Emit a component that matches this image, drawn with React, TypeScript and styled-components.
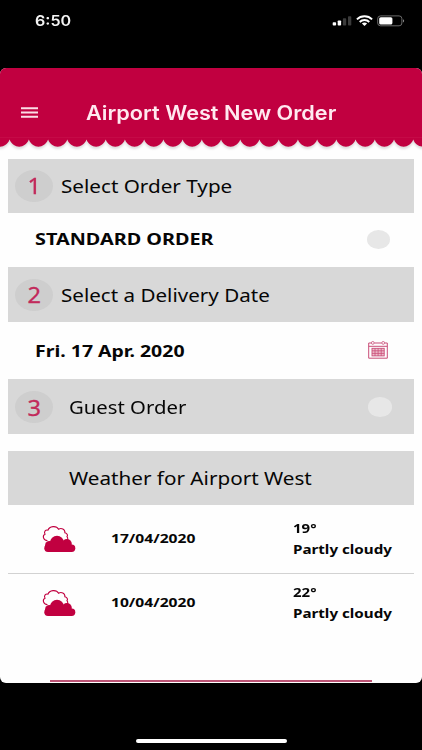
import React from 'react';
import styled, { createGlobalStyle } from 'styled-components';

const CRIMSON = '#c10040';

const GlobalStyle = createGlobalStyle`
  body { margin: 0; background: #000; }
  * { box-sizing: border-box; }
`;

const Screen = styled.div`
  width: 422px;
  height: 750px;
  background: #000;
  display: flex;
  flex-direction: column;
  overflow: hidden;
`;

const Text = styled.span<{ $size: number; $stretch: number; $bold?: boolean; $drop?: number }>`
  display: block;
  font-family: "Noto Sans", "Open Sans", sans-serif;
  font-size: ${p => p.$size}px;
  font-weight: ${p => (p.$bold ? 700 : 400)};
  line-height: 22px;
  color: #060606;
  white-space: nowrap;
  transform: translateY(${p => p.$drop ?? 0}px) scaleX(${p => p.$stretch});
  transform-origin: left center;
`;

const StatusBar = styled.div`
  height: 67.5px;
  flex: none;
  display: flex;
  align-items: flex-start;
  justify-content: space-between;
  padding: 12px 17px 0 35px;
`;

const Clock = styled(Text)`
  font-family: Inter, sans-serif;
  font-weight: 600;
  color: #f4f4f4;
  line-height: 18px;
`;

const StatusIcons = styled.svg`
  display: block;
  width: 74px;
  height: 18px;
`;

const Card = styled.div`
  height: 615px;
  flex: none;
  background: #fefefe;
  border-radius: 6px;
  overflow: hidden;
  display: flex;
  flex-direction: column;
`;

const Header = styled.header`
  height: 69px;
  flex: none;
  background: ${CRIMSON};
  display: flex;
  align-items: center;
  padding: 21px 0 0 21px;
`;

const MenuIcon = styled.svg`
  display: block;
  width: 17px;
  height: 11px;
  margin-right: 48px;
`;

const Title = styled(Text)`
  font-family: Inter, sans-serif;
  font-weight: 600;
  color: #ffe9f0;
`;

const Awning = styled.svg`
  display: block;
  flex: none;
  width: 422px;
  height: 22px;
`;

const Shadow = styled.path`
  filter: blur(1px);
`;

const Content = styled.main`
  flex: 1;
  padding: 0 8px;
  display: flex;
  flex-direction: column;
`;

const Bar = styled.section<{ $height: number; $indent?: number; $gap?: number }>`
  height: ${p => p.$height}px;
  flex: none;
  background: #d8d8d8;
  display: flex;
  align-items: center;
  padding: 1px 22px 0 ${p => p.$indent ?? 6.5}px;
  gap: ${p => p.$gap ?? 8}px;
  width: 405.5px;
`;

const Badge = styled.div`
  width: 38.5px;
  height: 32px;
  border-radius: 50%;
  background: #cecece;
  display: grid;
  place-items: center;
  flex: none;
`;

const Digit = styled(Text)`
  color: #c22a5b;
  transform-origin: center;
  -webkit-text-stroke: 0.3px #c22a5b;
`;

const Row = styled.section<{ $height: number; $right: number }>`
  height: ${p => p.$height}px;
  flex: none;
  display: flex;
  align-items: center;
  justify-content: space-between;
  padding: 0 ${p => p.$right}px 0 26.5px;
`;

const Toggle = styled.div`
  width: 23.5px;
  height: 19.5px;
  border-radius: 50%;
  background: #e7e7e7;
  margin-left: auto;
`;

const CalendarSvg = styled.svg`
  display: block;
  width: 20px;
  height: 18px;
  margin-bottom: 1px;
`;

const Gap = styled.div`
  height: 16.5px;
  flex: none;
`;

const Forecast = styled.article<{ $height: number; $line?: boolean }>`
  width: 405.5px;
  height: ${p => p.$height}px;
  flex: none;
  display: grid;
  grid-template-columns: 69px 182px 1fr;
  align-items: center;
  padding-left: 33.5px;
  border-bottom: 1px solid ${p => (p.$line ? '#d2d2d2' : 'transparent')};
`;

const CloudSvg = styled.svg`
  display: block;
  width: 36px;
  height: 28px;
`;

const Conditions = styled.div`
  display: flex;
  flex-direction: column;
`;

const NextButtonEdge = styled.div`
  margin: auto 42px 1px;
  height: 1.5px;
  background: #bd5475;
`;

const HomeArea = styled.div`
  flex: 1;
  display: flex;
  justify-content: center;
  align-items: flex-end;
  padding-bottom: 7px;
`;

const HomeIndicator = styled.div`
  width: 151px;
  height: 4px;
  border-radius: 2px;
  background: #fff;
`;

const SCALLOP = 19.22;
const scallopPath = () => {
  let d = 'M-9.6 0 V2.5';
  for (let i = 0; i < 23; i++) {
    const x = -9.6 + i * SCALLOP;
    d += ` L${x} 2.5 C${x + 3.4} 12 ${x + SCALLOP - 3.4} 12 ${x + SCALLOP} 2.5`;
  }
  return `${d} V0 Z`;
};

const Scallops = () => (
  <Awning viewBox="0 0 422 22">
    <Shadow d={scallopPath()} fill="#9c8f93" opacity="0.32" transform="translate(0 2.3)" />
    <path d={scallopPath()} fill={CRIMSON} />
    <path d="M0 .5H422" stroke="#cc1c55" strokeWidth=".6" opacity=".6" />
  </Awning>
);

const Cloud = () => (
  <CloudSvg viewBox="0 0 36 28">
    <path
      d="M5 15.600 C.9 14.900 .3 10.400 3 9.200 C1.500 6.400 3.800 4.600 6 5.200 C7.400 .9 14.400 .3 16.600 4.200 C19.200 2.600 23.200 3.900 22.900 7.800 C25.400 8.300 26 10.400 25 11.700 C25.900 12.600 26 13.600 25.500 14.800"
      fill="none" stroke={CRIMSON} strokeWidth="1.100" strokeLinecap="round"
    />
    <g fill={CRIMSON}>
      <rect x="2.300" y="19.600" width="31" height="7.300" rx="3.650" />
      <ellipse cx="15" cy="17.300" rx="6.900" ry="6.500" />
      <circle cx="24.900" cy="19" r="4.900" />
      <circle cx="7.300" cy="20.200" r="4.200" />
      <path d="M8 16.500H27V24H8Z" />
    </g>
  </CloudSvg>
);

const Calendar = () => (
  <CalendarSvg viewBox="0 0 20 18" fill="none" stroke="#c94e78">
    <path d="M.7 2H3.300M6.300 2H13.700M16.700 2H19.300V17.200H.7V2M.7 5.300H19.300" strokeWidth="1" />
    <circle cx="4.800" cy="1.900" r="1.400" strokeWidth=".8" />
    <circle cx="15.200" cy="1.900" r="1.400" strokeWidth=".8" />
    <rect x="4" y="7.300" width="12.200" height="7.600" strokeWidth=".9" fill="#eebccb" />
    <path d="M7 7.300V15M10.100 7.300V15M13.200 7.300V15M4 9.800H16.200M4 12.400H16.200" strokeWidth=".8" />
  </CalendarSvg>
);

const PhoneStatus = () => (
  <StatusIcons viewBox="0 0 74 18">
    <rect x="1.700" y="10.200" width="3.400" height="3.400" rx=".8" fill="#fff" />
    <rect x="6.700" y="8.400" width="3.400" height="5.200" rx=".8" fill="#fff" />
    <rect x="11.900" y="6.200" width="3.300" height="7.400" rx=".8" fill="#3b3b3b" />
    <rect x="17" y="4.200" width="3.300" height="9.400" rx=".8" fill="#3b3b3b" />
    <g fill="none" stroke="#fff" strokeWidth="1.900">
      <path d="M25.900 7.300 C30 3.200 37 3.200 41.100 7.300" />
      <path d="M28.700 10 C31.300 7.400 35.700 7.400 38.300 10" />
    </g>
    <path d="M33.500 13.900 L30.900 11.500 C32.300 10.200 34.700 10.200 36.100 11.500 Z" fill="#fff" />
    <rect x="46.700" y="3.900" width="24.200" height="9.900" rx="2.800" fill="none" stroke="#777" strokeWidth=".9" />
    <rect x="48.200" y="5.200" width="13.200" height="7.300" rx="1.600" fill="#fff" />
    <path d="M72 7.200 C73.500 7.800 73.500 9.800 72 10.400 Z" fill="#888" />
  </StatusIcons>
);

const forecasts = [
  { date: '17/04/2020', temp: '19°', sky: 'Partly cloudy', height: 69.5, line: true },
  { date: '10/04/2020', temp: '22°', sky: 'Partly cloudy', height: 58, line: false },
];

export default function App() {
  return (
    <>
      <GlobalStyle />
      <Screen>
        <StatusBar>
          <Clock $size={14.5} $stretch={1.109}>6:50</Clock>
          <PhoneStatus />
        </StatusBar>
        <Card>
          <Header>
            <MenuIcon viewBox="0 0 17 11" aria-label="Menu">
              <path d="M0 1.300H17M0 5.500H17M0 9.700H17" stroke="#fbdde6" strokeWidth="1.900" />
            </MenuIcon>
            <Title $size={19.5} $stretch={1.111}>Airport West New Order</Title>
          </Header>
          <Scallops />
          <Content>
            <Bar $height={54}>
              <Badge><Digit $size={21.5} $stretch={1.1}>1</Digit></Badge>
              <Text $size={18} $stretch={1.148} $drop={-0.5}>Select Order Type</Text>
            </Bar>
            <Row $height={54} $right={24}>
              <Text $size={15.4} $stretch={1.288} $drop={-0.5} $bold>STANDARD ORDER</Text>
              <Toggle />
            </Row>
            <Bar $height={55.5}>
              <Badge><Digit $size={21.5} $stretch={1.1} $drop={-0.4}>2</Digit></Badge>
              <Text $size={18} $stretch={1.144} $drop={-0.4}>Select a Delivery Date</Text>
            </Bar>
            <Row $height={57} $right={26}>
              <Text $size={15.4} $stretch={1.265} $drop={0.7} $bold>Fri. 17 Apr. 2020</Text>
              <Calendar />
            </Row>
            <Bar $height={55} $gap={15.5}>
              <Badge><Digit $size={21.5} $stretch={1.1} $drop={0.5}>3</Digit></Badge>
              <Text $size={18} $stretch={1.128}>Guest Order</Text>
              <Toggle />
            </Bar>
            <Gap />
            <Bar $height={54} $indent={61}>
              <Text $size={18} $stretch={1.148} $drop={-0.5}>Weather for Airport West</Text>
            </Bar>
            {forecasts.map(f => (
              <Forecast key={f.date} $height={f.height} $line={f.line}>
                <Cloud />
                <Text $size={12.8} $stretch={1.22} $drop={-0.8} $bold>{f.date}</Text>
                <Conditions>
                  <Text $size={12.8} $stretch={1.171} $bold>{f.temp}</Text>
                  <Text $size={12.8} $stretch={1.185} $drop={-0.8} $bold>{f.sky}</Text>
                </Conditions>
              </Forecast>
            ))}
            <NextButtonEdge />
          </Content>
        </Card>
        <HomeArea><HomeIndicator /></HomeArea>
      </Screen>
    </>
  );
}
